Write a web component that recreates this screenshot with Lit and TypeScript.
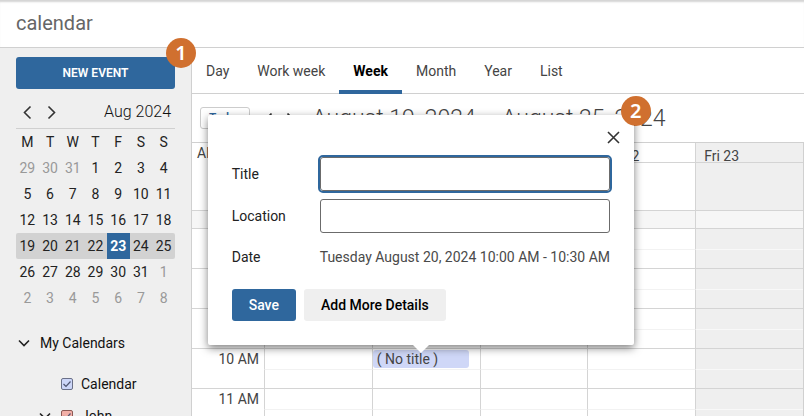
import { LitElement, html, css, svg } from "lit";
import { customElement, property, state } from "lit/decorators.js";
import { classMap } from "lit/directives/class-map.js";

const icon = (w: number, h: number, d: string) => html`<svg
  width=${w}
  height=${h}
  viewBox="0 0 ${w} ${h}"
  fill="none"
  stroke="currentColor"
  stroke-width="1.6"
  aria-hidden="true"
>
  ${svg`<path d=${d} />`}
</svg>`;

const LEFT = "M8.500 1.500L2.500 7.500L8.500 13.500";
const RIGHT = "M1.500 1.500L7.500 7.500L1.500 13.500";
const SMALL_LEFT = "M6.500 0.500L1.500 5.500L6.500 10.500";
const SMALL_RIGHT = "M0.500 0.500L5.500 5.500L0.500 10.500";
const DOWN = "M1 1.500L6 6.500L11 1.500";

@customElement("mini-calendar")
export class MiniCalendar extends LitElement {
  static styles = css`
    :host {
      display: block;
    }
    .nav {
      display: flex;
      align-items: center;
      height: 32px;
      padding: 0 4px 0 6px;
      border-bottom: 1px solid #d0d0d0;
      color: #333;
    }
    .step {
      display: flex;
      margin-right: 15px;
      padding: 0;
      border: 0;
      background: none;
      color: inherit;
    }
    .month {
      margin-left: auto;
      font-size: 16px;
      font-weight: 300;
      color: #111;
    }
    .days {
      width: 100%;
      table-layout: fixed;
      border-spacing: 0;
      text-align: center;
      color: #222;
    }
    .days th,
    .days td {
      height: 26px;
      padding: 0;
      font-size: 14px;
      font-weight: 400;
      line-height: 16px;
    }
    .days .outside {
      color: #999;
    }
    .current td {
      background: #d2d2d2;
    }
    .current td:first-child {
      border-radius: 2px 0 0 2px;
    }
    .current td:last-child {
      border-radius: 0 2px 2px 0;
    }
    .days .today {
      background: #2f679d;
      color: #fff;
      font-weight: 700;
    }
  `;

  @property({ type: Number }) today = 23;

  private get weeks(): { day: number; outside: boolean }[][] {
    const cells = Array.from({ length: 42 }, (_, i) => {
      const n = i - 2;
      if (n < 1) return { day: n + 31, outside: true };
      if (n > 31) return { day: n - 31, outside: true };
      return { day: n, outside: false };
    });
    return Array.from({ length: 6 }, (_, w) => cells.slice(w * 7, w * 7 + 7));
  }

  render() {
    return html`
      <div class="nav">
        <button class="step" aria-label="Previous month">${icon(10, 15, LEFT)}</button>
        <button class="step" aria-label="Next month">${icon(10, 15, RIGHT)}</button>
        <span class="month">Aug 2024</span>
      </div>
      <table class="days">
        <thead>
          <tr>
            ${["M", "T", "W", "T", "F", "S", "S"].map((d) => html`<th scope="col">${d}</th>`)}
          </tr>
        </thead>
        <tbody>
          ${this.weeks.map((week) => {
            const current = week.some((c) => !c.outside && c.day === this.today);
            return html`<tr class=${classMap({ current })}>
              ${week.map(
                (c) => html`<td
                  class=${classMap({ outside: c.outside, today: !c.outside && c.day === this.today })}
                >${c.day}</td>`
              )}
            </tr>`;
          })}
        </tbody>
      </table>
    `;
  }
}

@customElement("event-popover")
export class EventPopover extends LitElement {
  static styles = css`
    :host {
      display: block;
      box-sizing: border-box;
      padding: 42px 24px 24px;
      border-radius: 2px;
      background: #fff;
      box-shadow: 0 3px 8px rgba(0, 0, 0, 0.5);
      font-size: 14px;
      line-height: 16px;
      color: #222;
      white-space: nowrap;
    }
    :host::after {
      content: "";
      position: absolute;
      top: 100%;
      left: calc(50% - 8px);
      border: 8px solid transparent;
      border-top-color: #fff;
      border-bottom: 0;
    }
    .close {
      position: absolute;
      top: 16px;
      right: 14px;
      display: flex;
      padding: 0;
      border: 0;
      background: none;
      color: #333;
    }
    .fields {
      display: grid;
      grid-template-columns: 80px 290px;
      gap: 8px;
      align-items: center;
    }
    .box {
      box-sizing: border-box;
      width: 100%;
      height: 34px;
      padding: 0 8px;
      border: 1px solid #6b6b6b;
      border-radius: 3px;
      background: #fff;
      font: inherit;
      outline: none;
    }
    .box.focused {
      outline: 2px solid #2f679d;
    }
    .date {
      line-height: 32px;
      color: #4a4a4a;
    }
    .actions {
      display: flex;
      gap: 8px;
      margin-top: 16px;
    }
    .action {
      height: 32px;
      padding: 0 17px;
      border: 0;
      border-radius: 3px;
      background: #efefef;
      color: #000;
      font: inherit;
      font-weight: 500;
    }
    .primary {
      background: #2f679d;
      color: #fff;
    }
  `;

  @property() when = "";

  render() {
    return html`
      <button class="close" aria-label="Close">${icon(13, 13, "M1 1L12 12M12 1L1 12")}</button>
      <div class="fields">
        <label for="title">Title</label>
        <input id="title" class="box focused" type="text" />
        <label for="location">Location</label>
        <input id="location" class="box" type="text" />
        <span>Date</span>
        <span class="date">${this.when}</span>
      </div>
      <div class="actions">
        <button class="action primary">Save</button>
        <button class="action">Add More Details</button>
      </div>
    `;
  }
}

@customElement("app-root")
export class AppRoot extends LitElement {
  static styles = css`
    :host {
      display: flex;
      flex-direction: column;
      height: 100vh;
      overflow: hidden;
      background: #fff;
      font-family: Roboto, "Liberation Sans", sans-serif;
      font-size: 14px;
      line-height: 16px;
      color: #444;
    }
    button {
      font-family: inherit;
    }
    .banner {
      flex: none;
      padding: 11px 16px 12px;
      border-bottom: 1px solid #d0d0d0;
      box-shadow: inset 0 3px 2px -1px #d4d4d4;
    }
    .name {
      margin: 0;
      font-size: 20px;
      font-weight: 400;
      line-height: 24px;
      color: #666;
    }
    .body {
      display: flex;
      flex: 1;
      min-height: 0;
    }
    .side {
      flex: none;
      width: 159px;
      padding: 9px 16px 0;
      border-right: 1px solid #d0d0d0;
      background: #efefef;
    }
    .create {
      position: relative;
      margin-bottom: 7px;
    }
    .new {
      display: block;
      width: 100%;
      height: 32px;
      border: 0;
      border-radius: 3px;
      background: #2f679d;
      color: #fff;
      font-size: 12px;
      font-weight: 600;
    }
    .badge {
      position: absolute;
      z-index: 3;
      width: 30px;
      height: 30px;
      border-radius: 50%;
      background: #d0702f;
      color: #fff;
      font: 600 20px/30px "Noto Sans", sans-serif;
      text-align: center;
    }
    .create .badge {
      top: -19px;
      right: -21px;
    }
    .anchor .badge {
      top: -19px;
      right: -17px;
    }
    .tree {
      margin: 16px 0 0;
      padding: 0;
      list-style: none;
      color: #111;
    }
    .item {
      display: flex;
      align-items: center;
      height: 32px;
    }
    .root {
      gap: 8px;
      margin-bottom: 9px;
    }
    .fold {
      display: flex;
      justify-content: center;
      width: 16px;
      padding: 0;
      border: 0;
      background: none;
      color: #222;
    }
    .child {
      gap: 8px;
      padding-left: 21px;
    }
    .pick {
      display: flex;
      align-items: center;
      gap: 8px;
    }
    .tick {
      appearance: none;
      box-sizing: border-box;
      width: 12px;
      height: 12px;
      margin: 0;
      border: 1px solid #6a7088;
      border-radius: 2px;
      background: #ccd6f8;
    }
    .tick.red {
      border-color: #8d5a55;
      background: #f3b0a8;
    }
    .tickbox {
      display: grid;
      width: 12px;
      height: 12px;
      color: #4d5470;
    }
    .tickbox > * {
      grid-area: 1 / 1;
    }
    .tickbox svg {
      z-index: 1;
      pointer-events: none;
    }
    .blank {
      width: 16px;
    }
    .main {
      flex: 1;
      min-width: 0;
      overflow: hidden;
    }
    .tabs {
      display: flex;
      border-bottom: 1px solid #d0d0d0;
    }
    .tab {
      height: 46px;
      margin-bottom: -1px;
      padding: 0 14px;
      border: 0;
      border-top: 4px solid transparent;
      border-bottom: 4px solid transparent;
      background: none;
      color: #444;
      font-size: 14px;
    }
    .tab.active {
      border-bottom-color: #2f679d;
      color: #000;
      font-weight: 700;
    }
    .range {
      display: flex;
      align-items: center;
      height: 48px;
      padding-left: 8px;
    }
    .todaybtn {
      height: 22px;
      padding: 0 8px;
      border: 1px solid #ccc;
      border-radius: 3px;
      background: #fff;
      color: #2f679d;
      font-size: 12px;
      font-weight: 500;
    }
    .step {
      display: flex;
      margin-left: 15px;
      padding: 0;
      border: 0;
      background: none;
      color: #333;
    }
    .span {
      margin: 2px 0 0 18px;
      font-size: 23px;
      font-weight: 300;
      line-height: 32px;
      color: #444;
      white-space: nowrap;
    }
    .week {
      width: 100%;
      table-layout: fixed;
      border-spacing: 0;
      border-top: 1px solid #d0d0d0;
      border-right: 1px solid #d0d0d0;
    }
    .week th,
    .week td {
      box-sizing: border-box;
      padding: 0;
      border-bottom: 1px solid #d4d4d4;
      font-weight: 400;
      text-align: left;
      vertical-align: top;
    }
    .week .cell {
      height: 20px;
      border-left: 1px solid #d4d4d4;
    }
    .week thead .cell {
      padding: 7px 0 0 8px;
      line-height: 12px;
    }
    .hours {
      width: 72px;
    }
    .week .allday {
      padding: 2px 5px;
    }
    .week .open {
      height: 48px;
    }
    .week .band,
    .week .band.now {
      height: 18px;
      background: #f6f6f6;
    }
    .week .bandhour {
      background: #f6f6f6;
    }
    .week .now {
      background: #efefef;
    }
    .week .hour {
      padding: 2px 5px;
      text-align: right;
    }
    .week .first {
      border-bottom: 0;
    }
    .week .second {
      border-top: 1px solid #f2f2f2;
    }
    .week .now.second {
      border-top-color: #f8f8f8;
    }
    .anchor {
      position: relative;
      height: 18px;
      margin: 1px 11px 0 0;
    }
    .event {
      display: block;
      width: 100%;
      height: 18px;
      padding: 0 4px;
      border: 0;
      border-radius: 3px;
      background: #cfd7f7;
      color: #444;
      font-size: 14px;
      text-align: left;
    }
    .floating {
      position: absolute;
      z-index: 2;
      bottom: calc(100% + 5px);
      left: 50%;
      transform: translateX(-50%);
    }
  `;

  @state() private view = "Week";

  private days = ["Mon 19", "Tue 20", "Wed 21", "Thu 22", "Fri 23"];
  private hours = ["7 AM", "8 AM", "9 AM", "10 AM", "11 AM"];

  private cell(day: string, extra: string, content: unknown = "") {
    return html`<td class="cell ${extra} ${day === "Fri 23" ? "now" : ""}">${content}</td>`;
  }

  private event() {
    return html`<div class="anchor">
      <button class="event">( No title )</button>
      <div class="floating">
        <event-popover when="Tuesday August 20, 2024 10:00 AM - 10:30 AM"></event-popover>
        <span class="badge">2</span>
      </div>
    </div>`;
  }

  private tick(label: string, tone: string) {
    return html`<label class="pick">
      <span class="tickbox">
        <input class="tick ${tone}" type="checkbox" checked />
        <svg width="12" height="12" viewBox="0 0 12 12" fill="none" stroke="currentColor" stroke-width="1.2">
          <path d="M2.500 6L5 8.500L9.500 3.500" />
        </svg>
      </span>
      ${label}
    </label>`;
  }

  render() {
    return html`
      <header class="banner"><h1 class="name">calendar</h1></header>
      <div class="body">
        <aside class="side">
          <div class="create">
            <button class="new">NEW EVENT</button>
            <span class="badge">1</span>
          </div>
          <mini-calendar></mini-calendar>
          <ul class="tree">
            <li class="item root">
              <button class="fold" aria-label="Collapse">${icon(12, 8, DOWN)}</button>
              My Calendars
            </li>
            <li class="item child">
              <span class="blank"></span>${this.tick("Calendar", "")}
            </li>
            <li class="item child">
              <button class="fold" aria-label="Collapse">${icon(12, 8, DOWN)}</button>
              ${this.tick("John", "red")}
            </li>
          </ul>
        </aside>
        <main class="main">
          <nav class="tabs">
            ${["Day", "Work week", "Week", "Month", "Year", "List"].map(
              (name) => html`<button
                class=${classMap({ tab: true, active: name === this.view })}
                @click=${() => (this.view = name)}
              >${name}</button>`
            )}
          </nav>
          <div class="range">
            <button class="todaybtn">Today</button>
            <button class="step" aria-label="Previous week">${icon(7, 11, SMALL_LEFT)}</button>
            <button class="step" aria-label="Next week">${icon(7, 11, SMALL_RIGHT)}</button>
            <h2 class="span">August 19, 2024 – August 25, 2024</h2>
          </div>
          <table class="week">
            <colgroup>
              <col class="hours" />
              ${this.days.map(() => html`<col />`)}
            </colgroup>
            <thead>
              <tr>
                <th class="allday" rowspan="2" scope="row">All Day</th>
                ${this.days.map(
                  (d) => html`<th scope="col" class=${classMap({ cell: true, now: d === "Fri 23" })}>${d}</th>`
                )}
              </tr>
              <tr>
                ${this.days.map((d) => this.cell(d, "open"))}
              </tr>
            </thead>
            <tbody>
              <tr>
                <td class="bandhour"></td>
                ${this.days.map((d) => this.cell(d, "band"))}
              </tr>
              ${this.hours.map(
                (h) => html`
                  <tr>
                    <th class="hour" rowspan="2" scope="row">${h}</th>
                    ${this.days.map((d) =>
                      this.cell(d, "first", h === "10 AM" && d === "Tue 20" ? this.event() : "")
                    )}
                  </tr>
                  <tr>
                    ${this.days.map((d) => this.cell(d, "second"))}
                  </tr>
                `
              )}
            </tbody>
          </table>
        </main>
      </div>
    `;
  }
}
